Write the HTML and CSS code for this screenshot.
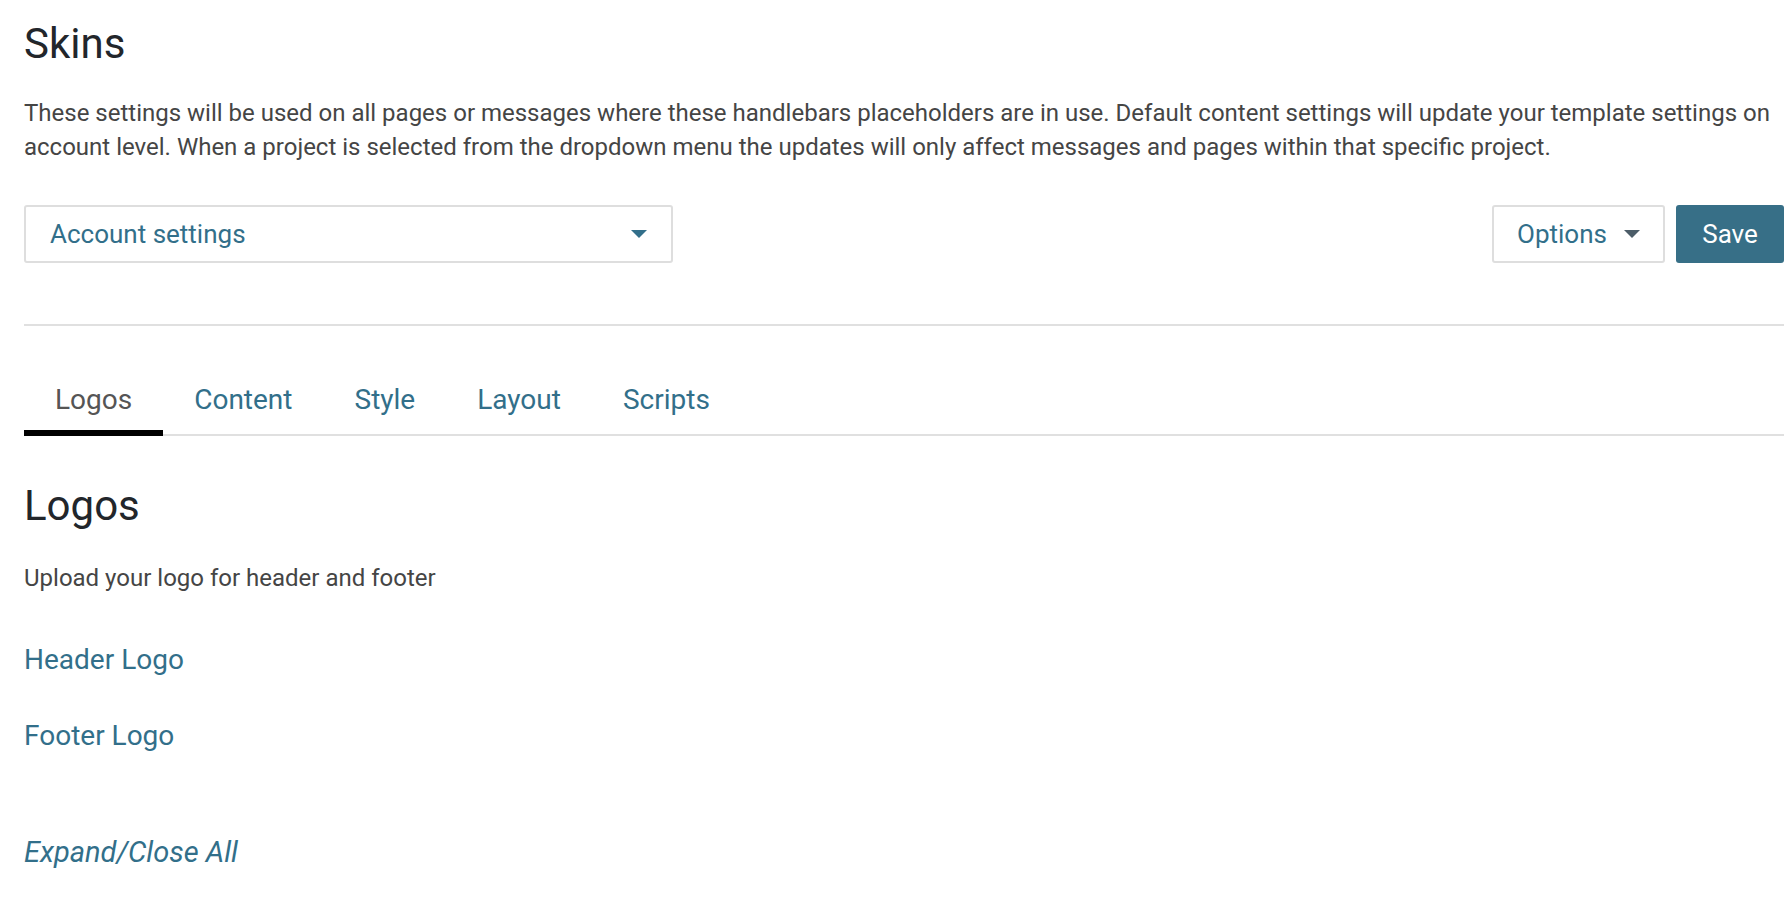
FILE: index.html
```html
<!DOCTYPE html>
<html lang="en">
<head>
<meta charset="utf-8">
<title>Skins</title>
<link rel="stylesheet" href="styles.css">
</head>
<body>
<main class="page">
  <h1 class="title">Skins</h1>
  <p class="intro">These settings will be used on all pages or messages where these handlebars placeholders are in use. Default content settings will update your template settings on account level. When a project is selected from the dropdown menu the updates will only affect messages and pages within that specific project.</p>

  <div class="toolbar">
    <div class="select">
      <span class="select-label">Account settings</span>
      <span class="caret caret-teal"></span>
    </div>
    <div class="actions">
      <button class="btn btn-outline"><span>Options</span><span class="caret caret-gray"></span></button>
      <button class="btn btn-primary">Save</button>
    </div>
  </div>

  <hr class="divider">

  <nav class="tabs">
    <a class="tab active">Logos</a>
    <a class="tab">Content</a>
    <a class="tab">Style</a>
    <a class="tab">Layout</a>
    <a class="tab">Scripts</a>
  </nav>

  <section class="panel">
    <h2 class="panel-title">Logos</h2>
    <p class="panel-desc">Upload your logo for header and footer</p>
    <a class="section-link header-link">Header Logo</a>
    <a class="section-link footer-link">Footer Logo</a>
    <a class="expand-link">Expand/Close All</a>
  </section>
</main>
</body>
</html>
```
FILE: styles.css
```css
html, body {
  margin: 0;
  padding: 0;
  background: #ffffff;
}

body {
  font-family: Roboto, "Liberation Sans", Arial, sans-serif;
  color: #454545;
}

.page {
  padding: 0 8px 0 24px;
}

.title {
  margin: 18px 0 0 0;
  font-size: 42px;
  line-height: 52px;
  font-weight: 400;
  color: #22262b;
}

.intro {
  margin: 26px 0 0 0;
  font-size: 24px;
  line-height: 34px;
  color: #454545;
}

.toolbar {
  margin-top: 41px;
  display: flex;
  justify-content: space-between;
  align-items: center;
}

.select {
  box-sizing: border-box;
  width: 649px;
  height: 58px;
  border: 2px solid #dedede;
  border-radius: 3px;
  display: flex;
  align-items: center;
  justify-content: space-between;
  padding: 0 24px 0 24px;
}

.select-label {
  font-size: 26px;
  color: #326f8a;
}

.caret {
  display: inline-block;
  width: 0;
  height: 0;
  border-left: 8px solid transparent;
  border-right: 8px solid transparent;
}

.caret-teal {
  border-top: 8px solid #326f8a;
}

.caret-gray {
  border-top: 8px solid #4c5d68;
  margin-left: 17px;
}

.actions {
  display: flex;
  gap: 11px;
}

.btn {
  box-sizing: border-box;
  height: 58px;
  font-family: Roboto, "Liberation Sans", Arial, sans-serif;
  font-size: 26px;
  border-radius: 3px;
  padding: 0;
  cursor: pointer;
  display: flex;
  align-items: center;
  justify-content: center;
  white-space: nowrap;
}

.btn-outline {
  background: #ffffff;
  border: 2px solid #dedede;
  color: #326f8a;
  width: 173px;
}

.btn-primary {
  background: #376f87;
  border: none;
  color: #ffffff;
  width: 108px;
}

.divider {
  margin: 61px 0 0 0;
  border: 0;
  border-top: 2px solid #e0e0e0;
}

.tabs {
  margin-top: 46px;
  display: flex;
  border-bottom: 2px solid #e0e0e0;
}

.tab {
  position: relative;
  padding: 0 31px;
  height: 62px;
  line-height: 56px;
  font-size: 28px;
  color: #326f8a;
}

.tab.active {
  color: #555555;
}

.tab.active::after {
  content: "";
  position: absolute;
  left: 0;
  right: 0;
  bottom: -2px;
  height: 6px;
  background: #000000;
}

.panel {
  display: flex;
  flex-direction: column;
  align-items: flex-start;
}

.panel-title {
  margin: 45px 0 0 0;
  font-size: 42px;
  line-height: 50px;
  font-weight: 400;
  color: #22262b;
}

.panel-desc {
  margin: 30px 0 0 0;
  font-size: 24px;
  line-height: 34px;
  color: #454545;
}

.section-link {
  font-size: 28px;
  line-height: 34px;
  color: #326f8a;
}

.header-link {
  margin-top: 48px;
}

.footer-link {
  margin-top: 42px;
}

.expand-link {
  margin-top: 82px;
  font-size: 29px;
  line-height: 34px;
  font-style: italic;
  color: #326f8a;
}
```
